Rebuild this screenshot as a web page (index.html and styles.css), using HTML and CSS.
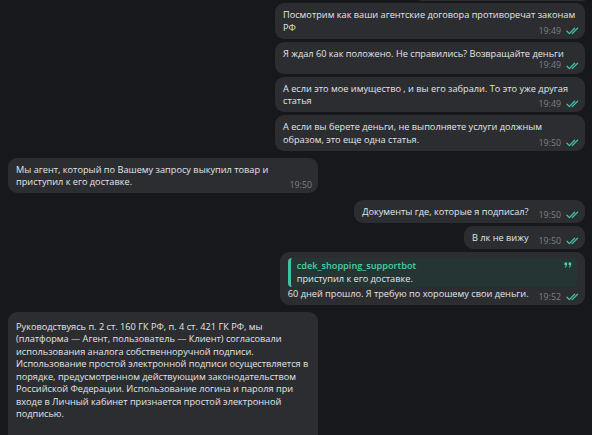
FILE: index.html
```html
<!DOCTYPE html>
<html lang="ru">
<head>
<meta charset="utf-8">
<link rel="stylesheet" href="styles.css">
</head>
<body>
<div class="chat">
  <div class="bubble out stub"></div>

  <div class="bubble out wide first">
    <p class="text">Посмотрим как ваши агентские договора противоречат законам<br>РФ<span class="meta"><span class="time">19:49</span><svg class="check" viewBox="0 0 13 8"><path d="M1 4.2 L3.4 6.6 L8.6 1.2 M6.2 6.6 L11.6 1.2"/></svg></span></p>
  </div>

  <div class="bubble out wide tight">
    <p class="text">Я ждал 60 как положено. Не справились? Возвращайте деньги</p>
    <div class="meta row"><span class="time">19:49</span><svg class="check" viewBox="0 0 13 8"><path d="M1 4.2 L3.4 6.6 L8.6 1.2 M6.2 6.6 L11.6 1.2"/></svg></div>
  </div>

  <div class="bubble out wide">
    <p class="text">А если это мое имущество , и вы его забрали. То это уже другая<br>статья<span class="meta"><span class="time">19:49</span><svg class="check" viewBox="0 0 13 8"><path d="M1 4.2 L3.4 6.6 L8.6 1.2 M6.2 6.6 L11.6 1.2"/></svg></span></p>
  </div>

  <div class="bubble out wide">
    <p class="text">А если вы берете деньги, не выполняете услуги должным<br>образом, это еще одна статья.<span class="meta"><span class="time">19:50</span><svg class="check" viewBox="0 0 13 8"><path d="M1 4.2 L3.4 6.6 L8.6 1.2 M6.2 6.6 L11.6 1.2"/></svg></span></p>
  </div>

  <div class="bubble in wide group">
    <p class="text">Мы агент, который по Вашему запросу выкупил товар и<br>приступил к его доставке.<span class="meta"><span class="time">19:50</span></span></p>
  </div>

  <div class="bubble out group">
    <p class="text">Документы где, которые я подписал?<span class="meta"><span class="time">19:50</span><svg class="check" viewBox="0 0 13 8"><path d="M1 4.2 L3.4 6.6 L8.6 1.2 M6.2 6.6 L11.6 1.2"/></svg></span></p>
  </div>

  <div class="bubble out">
    <p class="text">В лк не вижу<span class="meta"><span class="time">19:50</span><svg class="check" viewBox="0 0 13 8"><path d="M1 4.2 L3.4 6.6 L8.6 1.2 M6.2 6.6 L11.6 1.2"/></svg></span></p>
  </div>

  <div class="bubble out reply">
    <div class="quote">
      <div class="quote-name">cdek_shopping_supportbot</div>
      <div class="quote-text">приступил к его доставке.</div>
      <svg class="quote-mark" viewBox="0 0 8 6"><path d="M0.5 0.5h2.6v2.4L1.9 5.5H0.9l0.9-2.4H0.5z M4.6 0.5h2.6v2.4L6 5.5H5l0.9-2.4H4.6z"/></svg>
    </div>
    <p class="text">60 дней прошло. Я требую по хорошему свои деньги.<span class="meta"><span class="time">19:52</span><svg class="check" viewBox="0 0 13 8"><path d="M1 4.2 L3.4 6.6 L8.6 1.2 M6.2 6.6 L11.6 1.2"/></svg></span></p>
  </div>

  <div class="bubble in wide group big">
    <p class="text">Руководствуясь п. 2 ст. 160 ГК РФ, п. 4 ст. 421 ГК РФ, мы<br>(платформа — Агент, пользователь — Клиент) согласовали<br>использования аналога собственноручной подписи.<br>Использование простой электронной подписи осуществляется в<br>порядке, предусмотренном действующим законодательством<br>Российской Федерации. Использование логина и пароля при<br>входе в Личный кабинет признается простой электронной<br>подписью.<br><br>Вы подтвердили своё согласие с офертой</p>
  </div>
</div>
</body>
</html>
```

FILE: styles.css
```css
* { box-sizing: border-box; }

html, body {
  margin: 0;
  height: 100%;
  overflow: hidden;
}

body {
  background: #17181b;
  font-family: "Open Sans", "DejaVu Sans", sans-serif;
  color: #e3e5e8;
}

.chat {
  display: flex;
  flex-direction: column;
  gap: 3px;
  padding: 0 7px 0 8px;
}

.bubble {
  background: #2b2d31;
  border-radius: 9px;
  padding: 6px 6px 4.5px 8px;
  max-width: 312px;
  display: flow-root;
}

.bubble.out { align-self: flex-end; }
.bubble.in { align-self: flex-start; }
.bubble.wide { width: 310px; }
.bubble.group { margin-top: 4px; }
.bubble.first { margin-top: -1px; }
.bubble.tight { padding-bottom: 2.5px; }

.bubble.stub {
  width: 165px;
  height: 1px;
  padding: 0;
  border-radius: 0 0 6px 6px;
}

.text {
  margin: 0;
  font-size: 9.2px;
  line-height: 12.5px;
  white-space: nowrap;
}

.meta {
  float: right;
  display: flex;
  align-items: center;
  height: 12px;
  margin: 3px 0 -3px 10px;
}

.meta.row {
  float: none;
  justify-content: flex-end;
  height: 11px;
  margin: 0;
}

.meta.row .time {
  line-height: 11px;
}

.time {
  font-size: 8.8px;
  color: #7b8086;
  line-height: 12px;
}

.check {
  width: 13px;
  height: 8px;
  margin-left: 5px;
  fill: none;
  stroke: #3fc2a2;
  stroke-width: 1.3;
  stroke-linecap: round;
  stroke-linejoin: round;
}

.quote {
  position: relative;
  background: #253533;
  border-left: 3px solid #3fc2a2;
  border-radius: 4px;
  padding: 2px 20px 2px 6px;
  margin: 0 2px 0.5px 0;
  font-size: 9.2px;
  line-height: 12.5px;
  white-space: nowrap;
}

.quote-name {
  color: #4ccfae;
  font-weight: 600;
}

.quote-text {
  color: #e3e5e8;
}

.quote-mark {
  position: absolute;
  top: 4px;
  right: 5px;
  width: 8px;
  height: 6px;
  fill: #4ccfae;
}

.bubble.big {
  padding-top: 9px;
}
```
